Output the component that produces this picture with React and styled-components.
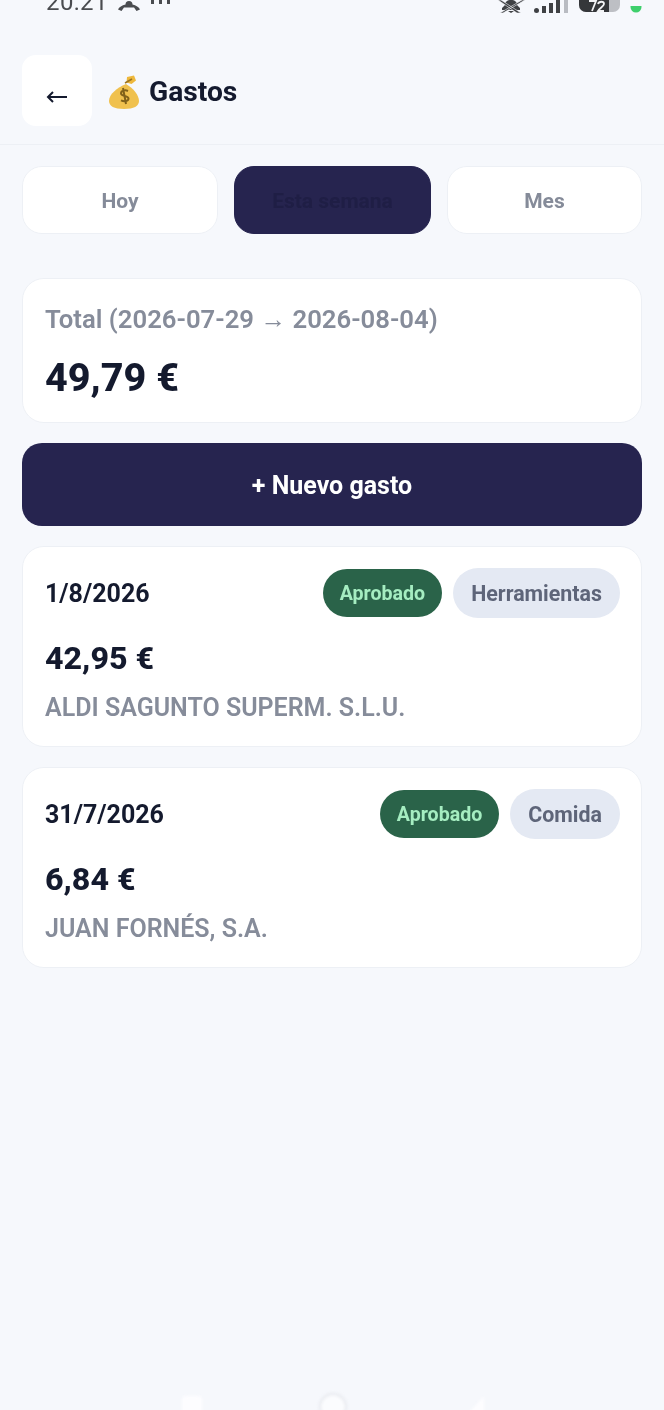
import React from 'react'
import styled, { createGlobalStyle } from 'styled-components'

const GlobalStyle = createGlobalStyle`
  html, body { margin: 0; padding: 0; background: #f6f8fc; }
  body { font-family: Roboto, "Liberation Sans", sans-serif; }
`
const Page = styled.div`
  position: relative;
  width: 664px;
  height: 1410px;
  overflow: hidden;
  background: #f6f8fc;
  display: flex;
  flex-direction: column;
`
const StatusBar = styled.div`
  height: 13px;
  padding: 0 22px 0 46px;
  display: flex;
  align-items: flex-end;
  justify-content: space-between;
  overflow: hidden;
  filter: blur(0.7px);
`
const StatusLeft = styled.div`
  display: flex;
  align-items: flex-end;
  gap: 10px;
  height: 13px;
`
const StatusRight = styled.div`
  display: flex;
  align-items: flex-end;
  gap: 9px;
  height: 13px;
`
const Clock = styled.span`
  font-size: 24px;
  line-height: 24px;
  margin: 0 0 -1px;
  color: #4a4c50;
  letter-spacing: 0.4px;
`
const Header = styled.header`
  height: 132px;
  box-sizing: border-box;
  padding: 42px 22px 0;
  display: flex;
  align-items: flex-start;
  border-bottom: 1px solid #edf0f5;
`
const BackButton = styled.button`
  width: 70px;
  height: 71px;
  border: 0;
  padding: 12px 0 0;
  border-radius: 14px;
  background: #ffffff;
  display: flex;
  align-items: center;
  justify-content: center;
  filter: blur(0.5px);
`
const Title = styled.h1`
  margin: 0 0 0 16px;
  height: 73px;
  display: flex;
  align-items: center;
  gap: 9px;
  font-size: 28.2px;
  font-weight: 700;
  color: #141a2e;
  filter: blur(0.4px);
`
const Content = styled.main`
  padding: 21px 22px 0;
  display: flex;
  flex-direction: column;
`
const Tabs = styled.div`
  display: grid;
  grid-template-columns: 196px 197px 195px;
  gap: 16px;
  margin-bottom: 44px;
`
const Tab = styled.button`
  height: 68px;
  border-radius: 20px;
  font-family: inherit;
  font-size: 21px;
  font-weight: 700;
  padding: 2px 0 0;
  border: 1px solid ${props => props.$active ? '#26244f' : '#edf0f5'};
  background: ${props => props.$active ? '#26244f' : '#ffffff'};
  color: ${props => props.$active ? '#1f1e45' : '#858b99'};
  filter: blur(0.5px);
`
const TotalCard = styled.section`
  height: 145px;
  box-sizing: border-box;
  background: #ffffff;
  border: 1px solid #edf0f5;
  border-radius: 22px;
  padding: 23px 22px 0;
  margin-bottom: 20px;
  filter: blur(0.4px);
`
const TotalLabel = styled.div`
  font-size: 25.7px;
  line-height: 34px;
  font-weight: 600;
  color: #868c9a;
`
const TotalValue = styled.div`
  margin-top: 17px;
  font-size: 39.5px;
  line-height: 50px;
  font-weight: 800;
  color: #141a2e;
`
const NewButton = styled.button`
  height: 83px;
  margin-bottom: 20px;
  border: 0;
  border-radius: 20px;
  background: #26244f;
  color: #ffffff;
  font-family: inherit;
  font-size: 25px;
  font-weight: 700;
  padding: 2px 0 0;
  filter: blur(0.4px);
`
const ExpenseCard = styled.article`
  height: 201px;
  box-sizing: border-box;
  background: #ffffff;
  border: 1px solid #edf0f5;
  border-radius: 22px;
  padding: 21px 21px 0 22px;
  margin-bottom: 20px;
  filter: blur(0.4px);
`
const CardTop = styled.div`
  display: flex;
  align-items: center;
  justify-content: space-between;
`
const DateText = styled.span`
  font-size: 25px;
  font-weight: 700;
  color: #141a2e;
`
const Badges = styled.div`
  display: flex;
  align-items: center;
  gap: 11px;
`
const Badge = styled.span`
  height: ${props => props.$status ? '48px' : '50px'};
  padding: 0 ${props => props.$status ? '17px' : '18px'};
  box-sizing: border-box;
  border-radius: 25px;
  display: flex;
  align-items: center;
  font-size: ${props => props.$status ? '19.6px' : '21.4px'};
  font-weight: 700;
  background: ${props => props.$status ? '#2a6349' : '#e4e9f3'};
  color: ${props => props.$status ? '#a5edc1' : '#5e6579'};
`
const Amount = styled.div`
  margin-top: 18px;
  font-size: 32.2px;
  line-height: 44px;
  font-weight: 800;
  color: #141a2e;
`
const Shop = styled.div`
  margin-top: 11px;
  font-size: 25px;
  line-height: 34px;
  font-weight: 600;
  color: #868c9a;
`
const NavGhost = styled.div`
  position: absolute;
  left: 180px;
  bottom: -6px;
  width: 306px;
  display: flex;
  justify-content: space-between;
  align-items: flex-end;
  filter: blur(1.5px);
`

const BackArrow = () => (
  <svg width='22' height='14' viewBox='0 0 22 14' fill='none' stroke='#141a2e' strokeWidth='2'>
    <path d='M21 7H2' />
    <path d='M7 2L2 7l5 5' />
  </svg>
)

const MoneyBag = () => (
  <svg width='32' height='34' viewBox='0 0 32 34'>
    <path d='M19 2l7-1.500 2 5-4.500 3.500-5-1.500z' fill='#eeb83c' />
    <path d='M18 9c7 4 13 11 13 17 0 5-5 8-15 8S1 31 1 26c0-7 8-13 17-17z' fill='#f0c14e' />
    <path d='M17 8l7-4' stroke='#9b7420' strokeWidth='1.600' />
    <path d='M20 16c-3-1.400-7-.4-7 2.300 0 3.400 7.500 1.900 7.500 5.300 0 2.500-4 3.400-7.500 1.700M15 13l3 16' fill='none' stroke='#80611a' strokeWidth='2' />
  </svg>
)

const ExpenseItem = ({ date, category, amount, shop }) => (
  <ExpenseCard>
    <CardTop>
      <DateText>{date}</DateText>
      <Badges>
        <Badge $status>Aprobado</Badge>
        <Badge>{category}</Badge>
      </Badges>
    </CardTop>
    <Amount>{amount}</Amount>
    <Shop>{shop}</Shop>
  </ExpenseCard>
)

const App = () => (
  <Page>
    <GlobalStyle />
    <StatusBar>
      <StatusLeft>
        <Clock>20:21</Clock>
        <svg width='22' height='10' viewBox='0 0 22 10' fill='#4a4c50' style={{ marginBottom: 2 }}>
          <path d='M11 0a3.500 3.500 0 0 1 3.500 3.500C18 4.500 21 6 22 8.500L18.500 10 16 6.500H6L3.500 10 0 8.500C1 6 4 4.500 7.500 3.500A3.500 3.500 0 0 1 11 0z' />
        </svg>
        <svg width='22' height='5' viewBox='0 0 22 5' fill='#4a4c50' style={{ marginBottom: 8 }}>
          <rect x='1' width='3' height='4' />
          <rect x='9' width='3' height='4' />
          <rect x='17' width='3' height='4' />
        </svg>
      </StatusLeft>
      <StatusRight>
        <svg width='28' height='13' viewBox='0 0 28 13' fill='#3f4144'>
          <path d='M14 0c4 0 6 2 6 5l3 3v2H5V8l3-3c0-3 2-5 6-5z' />
          <path d='M11 11h6l-3 2z' />
          <path d='M1 0h3l20 13h-4zM25 0h3L6 13H3z' fill='#3f4144' stroke='#f6f8fc' strokeWidth='0.6' />
        </svg>
        <svg width='36' height='13' viewBox='0 0 36 13' fill='#3f4144'>
          <rect x='0' y='8' width='5' height='5' rx='2.500' />
          <rect x='8' y='6' width='4' height='7' />
          <rect x='15' y='3' width='4' height='10' />
          <rect x='22' y='0' width='4' height='13' />
          <rect x='30' y='0' width='4' height='13' fill='#b9bcc2' />
        </svg>
        <svg width='41' height='13' viewBox='0 0 41 13'>
          <path d='M0 0h41v5a7 7 0 0 1-7 7H7a7 7 0 0 1-7-7z' fill='#bdbfc4' />
          <path d='M0 0h30v12H7a7 7 0 0 1-7-7z' fill='#35373a' />
          <path d='M10 1h7l-4 10M19 4c1-3 6-3 6 0 0 2-4 4-6 7h6' fill='none' stroke='#f2f3f5' strokeWidth='1.800' />
        </svg>
        <svg width='12' height='7' viewBox='0 0 12 7' style={{ marginLeft: 1 }}>
          <circle cx='6' cy='1' r='5.500' fill='#3ecf6c' />
        </svg>
      </StatusRight>
    </StatusBar>
    <Header>
      <BackButton aria-label='Volver'><BackArrow /></BackButton>
      <Title><MoneyBag />Gastos</Title>
    </Header>
    <Content>
      <Tabs>
        <Tab>Hoy</Tab>
        <Tab $active>Esta semana</Tab>
        <Tab>Mes</Tab>
      </Tabs>
      <TotalCard>
        <TotalLabel>Total (2026-07-29 → 2026-08-04)</TotalLabel>
        <TotalValue>49,79 €</TotalValue>
      </TotalCard>
      <NewButton>+ Nuevo gasto</NewButton>
      <ExpenseItem date='1/8/2026' category='Herramientas' amount='42,95 €' shop='ALDI SAGUNTO SUPERM. S.L.U.' />
      <ExpenseItem date='31/7/2026' category='Comida' amount='6,84 €' shop='JUAN FORNÉS, S.A.' />
    </Content>
    <NavGhost>
      <svg width='24' height='22' viewBox='0 0 24 22'><rect x='2' y='2' width='20' height='20' rx='3' fill='#fdfdff' /></svg>
      <svg width='30' height='24' viewBox='0 0 30 24'><circle cx='15' cy='15' r='13' fill='#fbfcfe' stroke='#e6e8ed' strokeWidth='2' /></svg>
      <svg width='24' height='22' viewBox='0 0 24 22'><path d='M22 2v20H4z' fill='#fdfdff' /></svg>
    </NavGhost>
  </Page>
)

export default App
